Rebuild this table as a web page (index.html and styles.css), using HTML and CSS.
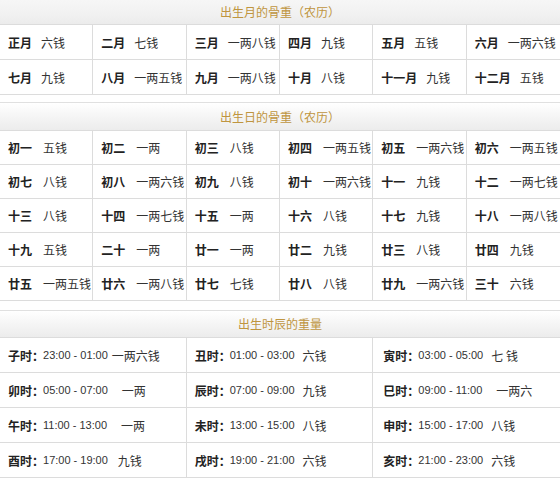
FILE: index.html
```html
<!DOCTYPE html>
<html lang="zh-CN">
<head>
<meta charset="utf-8">
<title>骨重</title>
<link rel="stylesheet" href="styles.css">
</head>
<body>
<div class="section sec-month">
  <div class="head">出生月的骨重（农历）</div>
  <div class="grid six">
    <div class="cell"><b class="lbl">正月</b><span>六钱</span></div>
    <div class="cell"><b class="lbl">二月</b><span>七钱</span></div>
    <div class="cell"><b class="lbl">三月</b><span>一两八钱</span></div>
    <div class="cell"><b class="lbl">四月</b><span>九钱</span></div>
    <div class="cell"><b class="lbl">五月</b><span>五钱</span></div>
    <div class="cell"><b class="lbl">六月</b><span>一两六钱</span></div>
    <div class="cell"><b class="lbl">七月</b><span>九钱</span></div>
    <div class="cell"><b class="lbl">八月</b><span>一两五钱</span></div>
    <div class="cell"><b class="lbl">九月</b><span>一两八钱</span></div>
    <div class="cell"><b class="lbl">十月</b><span>八钱</span></div>
    <div class="cell"><b class="lbl">十一月</b><span>九钱</span></div>
    <div class="cell"><b class="lbl">十二月</b><span>五钱</span></div>
  </div>
</div>

<div class="section sec-day">
  <div class="head">出生日的骨重（农历）</div>
  <div class="grid six">
    <div class="cell"><b class="dlbl">初一</b><span>五钱</span></div>
    <div class="cell"><b class="dlbl">初二</b><span>一两</span></div>
    <div class="cell"><b class="dlbl">初三</b><span>八钱</span></div>
    <div class="cell"><b class="dlbl">初四</b><span>一两五钱</span></div>
    <div class="cell"><b class="dlbl">初五</b><span>一两六钱</span></div>
    <div class="cell"><b class="dlbl">初六</b><span>一两五钱</span></div>
    <div class="cell"><b class="dlbl">初七</b><span>八钱</span></div>
    <div class="cell"><b class="dlbl">初八</b><span>一两六钱</span></div>
    <div class="cell"><b class="dlbl">初九</b><span>八钱</span></div>
    <div class="cell"><b class="dlbl">初十</b><span>一两六钱</span></div>
    <div class="cell"><b class="dlbl">十一</b><span>九钱</span></div>
    <div class="cell"><b class="dlbl">十二</b><span>一两七钱</span></div>
    <div class="cell"><b class="dlbl">十三</b><span>八钱</span></div>
    <div class="cell"><b class="dlbl">十四</b><span>一两七钱</span></div>
    <div class="cell"><b class="dlbl">十五</b><span>一两</span></div>
    <div class="cell"><b class="dlbl">十六</b><span>八钱</span></div>
    <div class="cell"><b class="dlbl">十七</b><span>九钱</span></div>
    <div class="cell"><b class="dlbl">十八</b><span>一两八钱</span></div>
    <div class="cell"><b class="dlbl">十九</b><span>五钱</span></div>
    <div class="cell"><b class="dlbl">二十</b><span>一两</span></div>
    <div class="cell"><b class="dlbl">廿一</b><span>一两</span></div>
    <div class="cell"><b class="dlbl">廿二</b><span>九钱</span></div>
    <div class="cell"><b class="dlbl">廿三</b><span>八钱</span></div>
    <div class="cell"><b class="dlbl">廿四</b><span>九钱</span></div>
    <div class="cell"><b class="dlbl">廿五</b><span>一两五钱</span></div>
    <div class="cell"><b class="dlbl">廿六</b><span>一两八钱</span></div>
    <div class="cell"><b class="dlbl">廿七</b><span>七钱</span></div>
    <div class="cell"><b class="dlbl">廿八</b><span>八钱</span></div>
    <div class="cell"><b class="dlbl">廿九</b><span>一两六钱</span></div>
    <div class="cell"><b class="dlbl">三十</b><span>六钱</span></div>
  </div>
</div>

<div class="section sec-time">
  <div class="head">出生时辰的重量</div>
  <div class="grid three">
    <div class="cell"><b>子时：</b><span class="t">23:00 - 01:00</span><span class="v-near">一两六钱</span></div>
    <div class="cell"><b>丑时：</b><span class="t">01:00 - 03:00</span><span class="v">六钱</span></div>
    <div class="cell"><b>寅时：</b><span class="t">03:00 - 05:00</span><span class="v">七 钱</span></div>
    <div class="cell"><b>卯时：</b><span class="t">05:00 - 07:00</span><span class="v-far">一两</span></div>
    <div class="cell"><b>辰时：</b><span class="t">07:00 - 09:00</span><span class="v">九钱</span></div>
    <div class="cell"><b>巳时：</b><span class="t">09:00 - 11:00</span><span class="v-far">一两六</span></div>
    <div class="cell"><b>午时：</b><span class="t">11:00 - 13:00</span><span class="v-far">一两</span></div>
    <div class="cell"><b>未时：</b><span class="t">13:00 - 15:00</span><span class="v">八钱</span></div>
    <div class="cell"><b>申时：</b><span class="t">15:00 - 17:00</span><span class="v">八钱</span></div>
    <div class="cell"><b>酉时：</b><span class="t">17:00 - 19:00</span><span class="v-mid">九钱</span></div>
    <div class="cell"><b>戌时：</b><span class="t">19:00 - 21:00</span><span class="v">六钱</span></div>
    <div class="cell"><b>亥时：</b><span class="t">21:00 - 23:00</span><span class="v">六钱</span></div>
  </div>
</div>
</body>
</html>
```

FILE: styles.css
```css
html, body {
  margin: 0;
  padding: 0;
  background: #ffffff;
}
body {
  width: 560px;
  font-family: "Noto Sans CJK SC", "Noto Sans", sans-serif;
  font-size: 12px;
  color: #333333;
}
* {
  box-sizing: border-box;
}
.section {
  border-top: 1px solid #e0e0e0;
}
.sec-month {
  border-top: none;
}
.sec-day {
  margin-top: 7px;
}
.sec-time {
  margin-top: 9px;
}
.head {
  height: 28px;
  line-height: 27px;
  text-align: center;
  color: #bf9540;
  font-size: 12px;
  background: linear-gradient(to bottom, #ffffff 0%, #f6f6f6 45%, #ececec 100%);
  border-bottom: 1px solid #dcdcdc;
}
.sec-month .head {
  height: 25px;
  line-height: 24px;
  background: linear-gradient(to bottom, #f6f6f6 0%, #f1f1f1 60%, #ececec 100%);
}
.sec-time .head {
  height: 27px;
  line-height: 26px;
}
.grid {
  display: grid;
}
.six {
  grid-template-columns: repeat(6, 1fr);
}
.three {
  grid-template-columns: repeat(3, 1fr);
}
.cell {
  height: 35px;
  display: flex;
  align-items: center;
  padding-left: 8px;
  border-right: 1px solid #dcdcdc;
  border-bottom: 1px solid #dcdcdc;
  white-space: nowrap;
  overflow: hidden;
}
.sec-day .cell {
  height: 34px;
}
.six .cell:nth-child(6n) {
  border-right: none;
}
.three .cell:nth-child(3n) {
  border-right: none;
  padding-left: 10px;
}
.lbl {
  font-weight: bold;
  color: #222222;
  margin-right: 9px;
}
.dlbl {
  font-weight: bold;
  color: #222222;
  width: 35px;
  flex: none;
}
.sec-time b {
  font-weight: bold;
  color: #222222;
}
.t {
  font-family: "Liberation Sans", Arial, sans-serif;
  font-size: 11px;
  margin-left: -1px;
}
.v-near {
  margin-left: 4px;
}
.v {
  margin-left: 8px;
}
.v-mid {
  margin-left: 10px;
}
.v-far {
  margin-left: 14px;
}
```
